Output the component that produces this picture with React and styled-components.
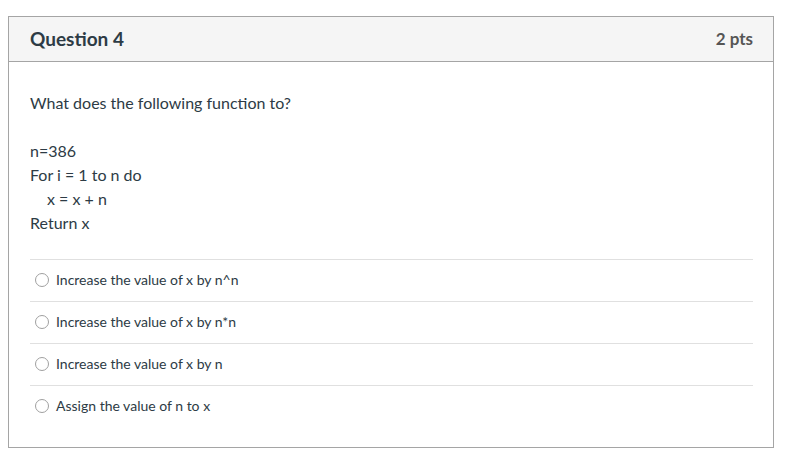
import React from "react"
import styled, { createGlobalStyle } from "styled-components"

const GlobalStyle = createGlobalStyle`
  body {
    margin: 0;
    background: #fff;
    font-family: Lato, "Open Sans", sans-serif;
    color: #2d3b45;
  }
`

const Page = styled.div`
  padding: 16px 0 0 8px;
`

const Card = styled.div`
  width: 766px;
  box-sizing: border-box;
  border: 1px solid #a5a5a5;
`

const Header = styled.div`
  display: flex;
  justify-content: space-between;
  align-items: center;
  height: 45px;
  padding: 0 20px 1px 21px;
  box-sizing: border-box;
  background: #f5f5f5;
  border-bottom: 1px solid #a5a5a5;
`

const Title = styled.h2`
  margin: 0;
  font-size: 19px;
  font-weight: 700;
  color: #2d3b45;
`

const Points = styled.span`
  font-size: 17px;
  font-weight: 700;
  color: #555;
`

const Body = styled.div`
  padding: 29px 20px 20px 21px;
`

const Text = styled.div`
  font-size: 16px;
  line-height: 24px;
  margin-bottom: ${(p) => (p.$gap ? "24px" : "0")};
  padding-left: ${(p) => (p.$indent ? "17px" : "0")};
`

const Answers = styled.div`
  margin-top: 24px;
`

const Answer = styled.label`
  display: flex;
  align-items: center;
  gap: 7px;
  height: 42px;
  box-sizing: border-box;
  padding: 0 0 2px 5px;
  border-top: 1px solid #e0e0e0;
  font-size: 14px;
  color: #2d3b45;
`

const Radio = styled.span`
  width: 14px;
  height: 14px;
  box-sizing: border-box;
  border-radius: 50%;
  border: 1px solid #a0a0a0;
  background: #fff;
`

const answers = [
  "Increase the value of x by n^n",
  "Increase the value of x by n*n",
  "Increase the value of x by n",
  "Assign the value of n to x",
]

export default function App() {
  return (
    <>
      <GlobalStyle />
      <Page>
        <Card>
          <Header>
            <Title>Question 4</Title>
            <Points>2 pts</Points>
          </Header>
          <Body>
            <Text $gap>What does the following function to?</Text>
            <Text>n=386</Text>
            <Text>For i = 1 to n do</Text>
            <Text $indent>x = x + n</Text>
            <Text>Return x</Text>
            <Answers>
              {answers.map((a) => (
                <Answer key={a}>
                  <Radio />
                  {a}
                </Answer>
              ))}
            </Answers>
          </Body>
        </Card>
      </Page>
    </>
  )
}
